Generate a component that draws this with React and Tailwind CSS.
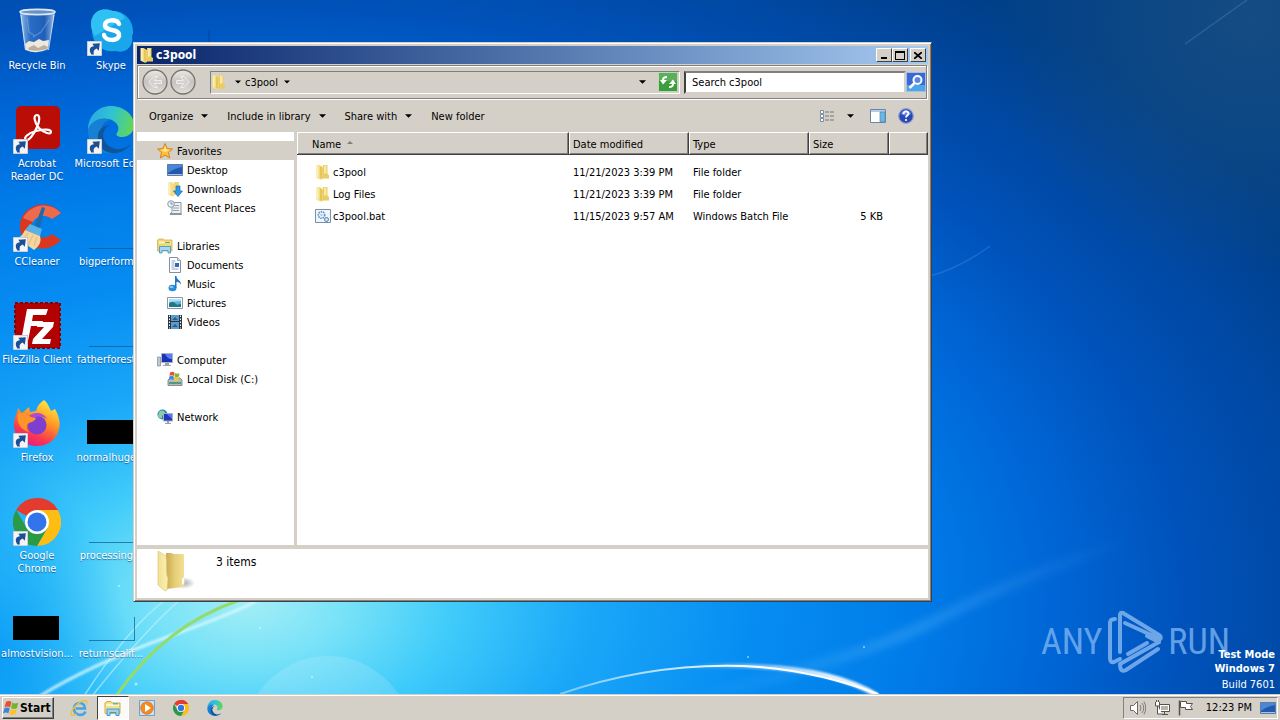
import React, { useState } from 'react';

const desktopItems = [
  { label: 'Recycle Bin', icon: RecycleBinIcon },
  { label: 'Acrobat\nReader DC', icon: AcrobatIcon, shortcut: true },
  { label: 'CCleaner', icon: CCleanerIcon, shortcut: true },
  { label: 'FileZilla Client', icon: FileZillaIcon, shortcut: true },
  { label: 'Firefox', icon: FirefoxIcon, shortcut: true },
  { label: 'Google\nChrome', icon: ChromeIcon, shortcut: true },
  { label: 'almostvision...', icon: BlackThumb },
  { label: 'Skype', icon: SkypeIcon, shortcut: true },
  { label: 'Microsoft Edge', icon: EdgeIcon, shortcut: true },
  { label: 'bigperform...', icon: EmptyThumb },
  { label: 'fatherforest...', icon: EmptyThumb },
  { label: 'normalhuge...', icon: BlackThumb },
  { label: 'processing...', icon: EmptyThumb },
  { label: 'returnscalif...', icon: EmptyThumb },
];

const navGroups = [
  {
    label: 'Favorites',
    icon: StarIcon,
    items: [
      { label: 'Desktop', icon: MonitorIcon },
      { label: 'Downloads', icon: DownloadsIcon },
      { label: 'Recent Places', icon: RecentIcon },
    ],
  },
  {
    label: 'Libraries',
    icon: LibrariesIcon,
    items: [
      { label: 'Documents', icon: DocumentIcon },
      { label: 'Music', icon: MusicIcon },
      { label: 'Pictures', icon: PictureIcon },
      { label: 'Videos', icon: VideoIcon },
    ],
  },
  { label: 'Computer', icon: ComputerIcon, items: [{ label: 'Local Disk (C:)', icon: DiskIcon }] },
  { label: 'Network', icon: NetworkIcon, items: [] },
];

const files = [
  { name: 'c3pool', date: '11/21/2023 3:39 PM', type: 'File folder', size: '', icon: FolderIcon },
  { name: 'Log Files', date: '11/21/2023 3:39 PM', type: 'File folder', size: '', icon: FolderIcon },
  { name: 'c3pool.bat', date: '11/15/2023 9:57 AM', type: 'Windows Batch File', size: '5 KB', icon: BatchIcon },
];

const raised = 'border border-t-white border-l-white border-r-[#404040] border-b-[#404040] bg-[#d4d0c8]';

/* ---------- desktop icons ---------- */

function RecycleBinIcon() {
  return (
    <svg viewBox="0 0 48 48" className="size-12">
      <defs>
        <linearGradient id="bin" x1="0" x2="1">
          <stop offset="0" stopColor="#bcd6f2" stopOpacity=".85" />
          <stop offset=".3" stopColor="#3c78c8" stopOpacity=".7" />
          <stop offset=".7" stopColor="#2c64b8" stopOpacity=".7" />
          <stop offset="1" stopColor="#c8dcf0" stopOpacity=".85" />
        </linearGradient>
      </defs>
      <path d="M7 4 12 42q11 5 23 0L42 4z" fill="url(#bin)" />
      <path d="m14 10 2 14 6 4M36 12l-8 12-8 5" fill="none" stroke="#8ab4e4" strokeWidth="1.200" opacity=".5" />
      <path d="m12 36 4-3 5 1 5-3 4 2 6-1-1 9q-11 6-22 1z" fill="#efe8dc" />
      <path d="m15 40 6-3 4 3 6-3 4 2-1 2q-10 3-18 1z" fill="#b8b0a0" />
      <ellipse cx="24.500" cy="4" rx="17.500" ry="2.600" fill="#6a92c4" stroke="#dce8f4" strokeWidth="1.600" />
      <path d="M8 7 12.500 42M41 7 35.500 42" stroke="#e4eefa" strokeWidth="1" opacity=".8" />
    </svg>
  );
}

function AcrobatIcon() {
  return (
    <svg viewBox="0 0 48 48" className="size-12">
      <rect x="3" y="0" width="44" height="43" rx="5" fill="#b90d06" />
      <path
        d="M24 9c3 0 3 6 0 12-3 7-8 14-11 13-3-2 2-7 10-9 8-2 15-2 15 1s-7 1-12-4c-5-6-6-13-2-13z"
        fill="none"
        stroke="#fff"
        strokeWidth="2.200"
        strokeLinejoin="round"
      />
    </svg>
  );
}

function CCleanerIcon() {
  return (
    <svg viewBox="0 0 48 48" className="size-12">
      <path d="M48 9A23 22 0 1 0 48 36L39 30A12 11 0 1 1 39 15z" fill="#d9371f" />
      <path d="M48 9A23 22 0 0 0 10 14l10 4a12 11 0 0 1 19-3z" fill="#ee6a4c" />
      <path d="m29 3 3 1-6 22-5-2z" fill="#1d6ba8" />
      <path d="m17 20 12 5-2 7-15-6z" fill="#54b4e8" />
      <path d="m12 26 15 6c2 7-2 11-6 14L4 34c4-1 6-4 8-8z" fill="#f4d6a0" />
      <path d="m15 29-6 8m11-6-5 11m9-9-3 9" stroke="#e4bc80" strokeWidth="1.200" />
    </svg>
  );
}

function FileZillaIcon() {
  return (
    <svg viewBox="0 0 48 48" className="size-12">
      <rect x="2" y="1" width="45" height="45" fill="#b30000" stroke="#8c0000" strokeWidth="2" strokeDasharray="3 2" />
      <path d="M14 7h21l-2 6H20l-1 6h11l-2 5H18l-3 15H8z" fill="#fff" />
      <path d="M25 20h16l-1 5-11 12h9l-1 5H19l1-5 11-12h-7z" fill="#fff" />
    </svg>
  );
}

function FirefoxIcon() {
  return (
    <svg viewBox="0 0 48 48" className="size-12">
      <defs>
        <linearGradient id="fox" x1=".8" y1="0" x2=".3" y2="1">
          <stop offset="0" stopColor="#fff04a" />
          <stop offset=".4" stopColor="#ff9a22" />
          <stop offset=".75" stopColor="#fb3a4e" />
          <stop offset="1" stopColor="#e21a88" />
        </linearGradient>
      </defs>
      <path
        d="M31 0c4 3 5 7 7 11l4-2c3 5 6 13 4 20-2 11-12 17-22 17C11 46 1 37 1 25c0-7 3-11 4-17l4 5 7-6 1 5 6-1c1-5 4-8 8-11z"
        fill="url(#fox)"
      />
      <circle cx="24" cy="25" r="9.500" fill="#7c3fd0" />
      <path d="M16 16c4-4 14-5 18 3-5-3-9-3-13-1z" fill="#b04ad0" />
      <path d="M5 14c4-2 9-1 12 3l6 1c-1 3-4 4-7 5-3 2-3 6 0 9-8-2-13-9-11-18z" fill="#ff9428" />
    </svg>
  );
}

function ChromeMark({ className }) {
  return (
    <svg viewBox="0 0 48 48" className={className}>
      <path d="M24 24 3.200 12A24 24 0 0 1 44.800 12z" fill="#e33b2e" />
      <path d="M24 24V0a24 24 0 0 1 20.800 12z" fill="#e33b2e" />
      <path d="M24 12h20.800A24 24 0 0 1 24 48l10.400-18z" fill="#fdbd13" />
      <path d="M13.600 30 3.200 12A24 24 0 0 0 24 48l10.400-18z" fill="#2a9a46" />
      <circle cx="24" cy="24" r="12" fill="#fff" />
      <circle cx="24" cy="24" r="9.500" fill="#3274ec" />
    </svg>
  );
}

function ChromeIcon() {
  return <ChromeMark className="size-12" />;
}

function SkypeIcon() {
  return (
    <svg viewBox="0 0 48 48" className="size-12">
      <path d="M14 2c5-1 9 0 12 1 11 0 20 9 20 20 0 2 0 4-1 5 2 10-6 18-16 15C16 45 5 36 5 22 2 13 6 4 14 2z" fill="#1aa6ea" />
      <path d="M14 2c-8 2-12 11-9 20 1 4 3 6 3 6l30-18C35 5 30 3 26 3c-3-1-7-2-12-1z" fill="#2fc0f4" />
      <path
        d="M32 16c-2-5-14-5-14 1 0 7 14 3 14 10 0 7-14 6-15 0"
        fill="none"
        stroke="#fff"
        strokeWidth="4.500"
        strokeLinecap="round"
      />
    </svg>
  );
}

function EdgeMark({ className, id }) {
  return (
    <svg viewBox="0 0 48 48" className={className}>
      <defs>
        <linearGradient id={id} x1="0" x2="1" y1=".3" y2=".5">
          <stop offset="0" stopColor="#2aa8e8" />
          <stop offset=".5" stopColor="#30c4d0" />
          <stop offset="1" stopColor="#62d658" />
        </linearGradient>
      </defs>
      <path d="M1 24C1 10 11 0 24 0s23 9 23 19c0 8-6 12-12 12-4 0-7-2-5-4 2-3 2-7-1-10-6-7-22-6-28 7z" fill={`url(#${id})`} />
      <path d="M1 24c3-10 14-14 22-10-6 1-10 7-9 15 1 9 9 15 17 17-16 6-31-6-30-22z" fill="#1680d4" />
      <path d="M23 19c-7 3-9 11-4 18 6 8 17 8 25 1-5 7-13 10-20 9-8-1-14-8-13-17 0-6 5-11 12-11z" fill="#10559c" />
    </svg>
  );
}

function EdgeIcon() {
  return <EdgeMark className="size-12" id="edgeLarge" />;
}

function BlackThumb() {
  return (
    <div className="flex size-12 items-end pb-1">
      <div className="h-6 w-[46px] border-b border-black/40 bg-black"></div>
    </div>
  );
}

function EmptyThumb() {
  return (
    <div className="flex size-12 items-end pb-[3px] pl-0.5">
      <div className="h-6 w-[46px] border-r border-b border-[#0a5a90]/70"></div>
    </div>
  );
}

function ShortcutArrow() {
  return (
    <svg viewBox="0 0 14 14" className="absolute bottom-0 left-0 size-[15px]">
      <rect width="14" height="14" fill="#f4f4f4" stroke="#8aa0b8" strokeWidth=".8" />
      <path d="M4 12.500C1.500 9 2.500 5 6.500 5L5 2.500l7-.5-1 7-2-2C6.500 8 5.500 10 6.500 12.500z" fill="#1d4f96" />
    </svg>
  );
}

/* ---------- small icons ---------- */

function FolderIcon() {
  return (
    <svg viewBox="0 0 16 16" className="size-4 shrink-0">
      <path d="M8 1h4.500v9l1.500 1v3.500H8z" fill="#e9cc62" />
      <path d="M9 1.500h2.500V9L9 10z" fill="#f8eaa6" />
      <path d="M1.500 1h3L8 3v12l-2 .8-4.500-2z" fill="#f3dd84" />
      <path d="M2 1.500h1.500v12L2 13z" fill="#fbf0b8" />
      <path d="m5 2 2.500 1.500V15L5 14z" fill="#e6c658" />
    </svg>
  );
}

function LargeFolderIcon() {
  return (
    <svg viewBox="0 0 40 44" className="h-11 w-10 shrink-0">
      <defs>
        <linearGradient id="inner" x1="0" x2="1">
          <stop offset="0" stopColor="#c9ab50" />
          <stop offset=".5" stopColor="#e8d07a" />
          <stop offset="1" stopColor="#f2e196" />
        </linearGradient>
        <linearGradient id="cover" x1="0" x2="1">
          <stop offset="0" stopColor="#f2e092" />
          <stop offset="1" stopColor="#fbf1b4" />
        </linearGradient>
        <radialGradient id="folderShade">
          <stop offset="0" stopColor="#70747c" stopOpacity=".6" />
          <stop offset="1" stopColor="#70747c" stopOpacity="0" />
        </radialGradient>
      </defs>
      <ellipse cx="27" cy="32" rx="11" ry="6" fill="url(#folderShade)" />
      <path d="M9 2h6l1 1h10l1 1v24l1 3-2 5-17 2z" fill="url(#inner)" />
      <path d="m1 0 8 5c1 6 0 12 1 20l1 2-1 12-2 1-7-6z" fill="url(#cover)" stroke="#dcc674" strokeWidth=".7" />
      <path d="m25 28 2-2v6l-2 2z" fill="#fff" />
    </svg>
  );
}

function BatchIcon() {
  return (
    <svg viewBox="0 0 16 16" className="size-4 shrink-0">
      <path d="M.5 1.500h15v13H.5z" fill="#eef5fb" stroke="#7b8ea4" />
      <circle cx="6.500" cy="7" r="3.200" fill="none" stroke="#5a92c4" strokeWidth="1.600" strokeDasharray="1.500 .8" />
      <circle cx="6.500" cy="7" r="1.200" fill="#a9cbe8" />
      <circle cx="11.500" cy="11.500" r="2" fill="#cfe2f2" stroke="#4f82b4" />
    </svg>
  );
}

function StarIcon() {
  return (
    <svg viewBox="0 0 16 16" className="size-4 shrink-0">
      <path d="m8 .5 2.200 5 5.300.5-4 3.600 1.200 5.400L8 12.200 3.300 15l1.200-5.400-4-3.600 5.300-.5z" fill="#fdbf3a" stroke="#d07d1c" strokeWidth=".9" />
      <path d="m8 2.500 1.500 4 3.500.5-5 2-4-2 2.700-.5z" fill="#ffe58c" />
    </svg>
  );
}

function MonitorIcon() {
  return (
    <svg viewBox="0 0 16 16" className="size-4 shrink-0">
      <path d="M.5 2.500h15v11H.5z" fill="#2458b0" stroke="#5a7ca8" />
      <path d="M1 3h14v2Q8 6 1 11z" fill="#5b9be4" opacity=".7" />
      <path d="M1 12h14v1H1z" fill="#a8c4dc" />
    </svg>
  );
}

function DownloadsIcon() {
  return (
    <svg viewBox="0 0 16 16" className="size-4 shrink-0">
      <path d="M7 1h5v13H7z" fill="#efd678" />
      <path d="M1.500 1h3L7 3v12l-1 .5L1.500 14z" fill="#f3dd84" />
      <path d="M2 1.500h1.500v12L2 13z" fill="#fbf0b8" />
      <path d="M9 5h4v5h2.500L11 15.500 6.500 10H9z" fill="#3298e4" stroke="#1a6cb4" strokeWidth=".7" />
    </svg>
  );
}

function RecentIcon() {
  return (
    <svg viewBox="0 0 16 16" className="size-4 shrink-0">
      <path d="M5 2.500h9v12H3l2-3z" fill="#eef1f4" stroke="#8d98a2" />
      <path d="M7 5.500h5M6 8h6M6 10.500h6" stroke="#8fa4b4" />
      <path d="M3 13h11l1 2H4z" fill="#8b969e" />
      <circle cx="4" cy="4" r="3.300" fill="#e8f2f6" stroke="#8f9ba4" />
      <path d="M4 2v2h2" fill="none" stroke="#55788f" strokeWidth=".8" />
    </svg>
  );
}

function LibrariesIcon() {
  return (
    <svg viewBox="0 0 16 16" className="size-4 shrink-0">
      <path d="M.5 2 2 1h4l1 1h8v11H.5z" fill="#f0d878" stroke="#cfae50" strokeWidth=".8" />
      <path d="M2 4.500h12" stroke="#fff8d0" strokeWidth="1.500" />
      <path d="M8 4h5v1H8z" fill="#5ab04a" />
      <path d="M2.500 8.500h11V15h-2.500v-2.500h-6V15H2.500z" fill="#a4d8f2" stroke="#4b98c4" strokeWidth=".9" />
    </svg>
  );
}

function DocumentIcon() {
  return (
    <svg viewBox="0 0 16 16" className="size-4 shrink-0">
      <path d="M2.500.5h8l3 3v12h-11z" fill="#fff" stroke="#8290a0" />
      <path d="M4.500 4h4M4.500 6h3M4.500 8h3M4.500 10h3M4.500 12h7" stroke="#88a4c8" />
      <path d="M8 6h4v4H8z" fill="#2c6ac0" />
      <path d="M10.500.5v3h3" fill="#dce4ee" stroke="#8290a0" strokeWidth=".8" />
    </svg>
  );
}

function MusicIcon() {
  return (
    <svg viewBox="0 0 16 16" className="size-4 shrink-0">
      <ellipse cx="5.500" cy="12" rx="4" ry="3.200" fill="#2b8dda" />
      <path d="M8 0h1.500c0 4 5 4 4.500 9-1-3-3-3-4.500-3v6H8z" fill="#1f7acb" />
      <ellipse cx="4.500" cy="11" rx="2" ry="1" fill="#8fd0f8" />
    </svg>
  );
}

function PictureIcon() {
  return (
    <svg viewBox="0 0 16 16" className="size-4 shrink-0">
      <path d="M.5 2.500h15v11H.5z" fill="#fff" stroke="#8496a8" />
      <path d="M2 4h12v8H2z" fill="#5cb4e4" />
      <path d="M2 9c3-4 5-2 7 0s4-1 5 0v3H2z" fill="#1e7886" />
      <path d="M2 4h12v2L2 7z" fill="#b4e0f4" />
    </svg>
  );
}

function VideoIcon() {
  return (
    <svg viewBox="0 0 16 16" className="size-4 shrink-0">
      <path d="M1 1h14v14H1z" fill="#2b3540" />
      <path d="M4 1h8v14H4z" fill="#5c9ccc" />
      <path d="M4 7.500h8" stroke="#2b3540" />
      <path d="m5 6 3-3 3 3zM5 13l3-3 3 3z" fill="#2d5f84" />
      <path d="M2.500 1.500v13M13.500 1.500v13" stroke="#fff" strokeDasharray="1.500 1.500" />
    </svg>
  );
}

function ComputerIcon() {
  return (
    <svg viewBox="0 0 16 16" className="size-4 shrink-0">
      <path d="M.5 5h3v9h-3z" fill="#c0c8d0" stroke="#808c98" strokeWidth=".7" />
      <path d="M4.500 1.500h11v9h-11z" fill="#1c32b4" stroke="#a8b4c8" />
      <path d="M8 2h7v5c-4 0-5-2-7-5z" fill="#5a7cf0" />
      <path d="M8 11h4v2h2v1H6v-1h2z" fill="#98a4b0" />
    </svg>
  );
}

function DiskIcon() {
  return (
    <svg viewBox="0 0 16 16" className="size-4 shrink-0">
      <path d="m1 9 2-2h10l2 2v5.500H1z" fill="#b4bcc0" stroke="#6e7c84" strokeWidth=".8" />
      <path d="M2 11h12v2H2z" fill="#4b9a8c" />
      <path d="M3 1.500c2-1 3-1 4.500 0L7 5c-2-1-3-1-4.500 0z" fill="#e6532c" />
      <path d="M8 2c2 1 3 1 4.500 0L12 5.500c-2 1-3 1-4.500 0z" fill="#7cb830" />
      <path d="M2.300 5.500c2-1 3-1 4.500 0L6.300 9c-2-1-3-1-4.500 0z" fill="#3c8ce0" />
      <path d="M7.300 6c2 1 3 1 4.500 0l-.5 3.500c-2 1-3 1-4.500 0z" fill="#fcc42c" />
    </svg>
  );
}

function NetworkIcon() {
  return (
    <svg viewBox="0 0 16 16" className="size-4 shrink-0">
      <circle cx="5.500" cy="5.500" r="5" fill="#2a7cb8" />
      <path d="M2 3c3-3 6-1 6 1S5 5 5 8s-3 1-4-1z" fill="#8ad0a0" />
      <path d="M6.500 4.500h9V12h-9z" fill="#2038b8" stroke="#a4b0c4" />
      <path d="M10 5h5v5z" fill="#5a78ec" />
      <path d="M10 12h2v2h2v1H8v-1h2z" fill="#94a0ac" />
    </svg>
  );
}

function WindowsFlag() {
  return (
    <svg viewBox="0 0 16 16" className="size-4">
      <path d="M3 2c2-1.500 4-1.200 5.500 0L7 7.500C5.500 6.300 3.500 6.300 1.500 7.500z" fill="#e4512c" />
      <path d="M9.300 2.500c2 1.200 4 1.200 6 0L14 8c-2 1.200-4 1.200-6 0z" fill="#74b42c" />
      <path d="M1.300 8.500c2-1.200 4-1.200 5.500 0l-1.500 5C3.800 12.300 2 12.300 0 13.500z" fill="#3d84dc" />
      <path d="M7.800 9c2 1.200 4 1.200 6 0l-1.500 5c-2 1.200-4 1.200-6 0z" fill="#fbc22c" />
    </svg>
  );
}

function ExplorerIcon() {
  return (
    <svg viewBox="0 0 18 18" className="size-[18px]">
      <path d="M1 4 3 2.500h4L8.500 4H16v10.500H1z" fill="#f7e08c" stroke="#ceac4c" />
      <path d="M2 6h13" stroke="#fffbe0" strokeWidth="1.500" />
      <path d="M9 4h5v1.500H9z" fill="#5bb8a8" />
      <path d="M3 10h12v6.500h-3v-3H6v3H3z" fill="#9ad4f0" stroke="#4a98c8" />
    </svg>
  );
}

function IeIcon() {
  return (
    <svg viewBox="0 0 18 18" className="size-[18px]">
      <path d="M15.500 12.500c-2 5-11.500 4.500-11.500-3C4 2.500 15 2 15 9.500H6" fill="none" stroke="#45a4e2" strokeWidth="2.600" />
      <path d="M1.500 16C-.5 12 10 0 16 2c1 .5 1 2 .5 3.500" fill="none" stroke="#ecc23c" strokeWidth="1.400" />
      <path d="M1.500 16c1 1 3 0 5-1" fill="none" stroke="#ecc23c" strokeWidth="1.400" />
    </svg>
  );
}

function PlayerIcon() {
  return (
    <svg viewBox="0 0 18 18" className="size-[18px]">
      <path d="M1.500 1.500h15v15h-15z" fill="#cfe2f2" stroke="#6ba3d0" />
      <circle cx="9" cy="9" r="6.300" fill="#f58a1e" stroke="#d46a0c" strokeWidth=".6" />
      <path d="m7 5 6 4-6 4z" fill="#fff" />
    </svg>
  );
}

function Caret({ className = 'w-[7px]' }) {
  return (
    <svg viewBox="0 0 8 4" className={`h-1 ${className}`}>
      <path d="M0 0h8L4 4z" fill="#000" />
    </svg>
  );
}

function NavCircle({ label, flip }) {
  return (
    <button type="button" aria-label={label}>
      <svg viewBox="0 0 26 26" className="size-[26px]">
        <defs>
          <linearGradient id={flip ? 'orbB' : 'orbA'} x1="0" x2="0" y1="0" y2="1">
            <stop offset="0" stopColor="#ebe9e6" />
            <stop offset=".5" stopColor="#c6c3bf" />
            <stop offset="1" stopColor="#e2e0dc" />
          </linearGradient>
        </defs>
        <circle cx="13" cy="13" r="12" fill={flip ? 'url(#orbB)' : 'url(#orbA)'} stroke="#77746f" strokeWidth="1.300" />
        <path
          d={flip ? 'M6.500 11.500h7L10.500 7.500h3.500l5.500 5.500-5.500 5.500h-3.500l3-4h-7z' : 'M19.500 11.500h-7l3-4H12L6.500 13l5.500 5.500h3.500l-3-4h7z'}
          fill="#d6d3cf"
          stroke="#efedeb"
        />
      </svg>
    </button>
  );
}

/* ---------- wallpaper ---------- */

function Wallpaper() {
  return (
    <svg viewBox="0 0 1280 720" preserveAspectRatio="xMidYMid slice" className="absolute inset-0 size-full" aria-hidden="true">
      <defs>
        <radialGradient id="sky" gradientUnits="userSpaceOnUse" cx="0" cy="0" r="1" gradientTransform="translate(250 600) scale(1200 760)">
          <stop offset="0" stopColor="#a4eef6" />
          <stop offset=".08" stopColor="#78e2f8" />
          <stop offset=".17" stopColor="#3fcbfa" />
          <stop offset=".28" stopColor="#1ba8f8" />
          <stop offset=".42" stopColor="#068df2" />
          <stop offset=".56" stopColor="#007be8" />
          <stop offset=".67" stopColor="#0066d6" />
          <stop offset=".78" stopColor="#0052ba" />
          <stop offset=".9" stopColor="#0047a0" />
          <stop offset="1" stopColor="#003f88" />
        </radialGradient>
        <radialGradient id="leftShade" gradientUnits="userSpaceOnUse" cx="0" cy="0" r="1" gradientTransform="translate(0 660) scale(130 190)">
          <stop offset="0" stopColor="#0094f6" stopOpacity=".75" />
          <stop offset="1" stopColor="#0094f6" stopOpacity="0" />
        </radialGradient>
        <radialGradient id="corner" gradientUnits="userSpaceOnUse" cx="1250" cy="20" r="260">
          <stop offset="0" stopColor="#1a4f80" stopOpacity=".8" />
          <stop offset="1" stopColor="#1a4f80" stopOpacity="0" />
        </radialGradient>
        <linearGradient id="arc" gradientUnits="userSpaceOnUse" x1="560" y1="690" x2="880" y2="690">
          <stop offset="0" stopColor="#fff" stopOpacity=".4" />
          <stop offset=".6" stopColor="#fff" />
        </linearGradient>
        <linearGradient id="arcGlow" gradientUnits="userSpaceOnUse" x1="690" y1="690" x2="830" y2="690">
          <stop offset="0" stopColor="#fff" stopOpacity="0" />
          <stop offset="1" stopColor="#fff" />
        </linearGradient>
        <linearGradient id="beam" gradientUnits="userSpaceOnUse" x1="680" y1="0" x2="1130" y2="0">
          <stop offset="0" stopColor="#6cc4ff" stopOpacity="0" />
          <stop offset=".5" stopColor="#6cc4ff" stopOpacity=".3" />
          <stop offset="1" stopColor="#6cc4ff" stopOpacity="0" />
        </linearGradient>
        <filter id="soft" x="-20%" y="-20%" width="140%" height="140%">
          <feGaussianBlur stdDeviation="4" />
        </filter>
        <filter id="glow" x="-20%" y="-50%" width="140%" height="200%">
          <feGaussianBlur stdDeviation="1" />
        </filter>
      </defs>
      <rect width="1280" height="720" fill="url(#sky)" />
      <rect width="1280" height="720" fill="url(#leftShade)" />
      <rect width="1280" height="720" fill="url(#corner)" />
      <path d="M680 700Q860 660 940 618T1130 540" fill="none" stroke="url(#beam)" strokeWidth="10" filter="url(#soft)" />
      <path d="m1185 44 62-44M930 276q30-8 60-30" stroke="#8cc4f4" strokeWidth="1.500" opacity=".2" fill="none" />
      <circle cx="328" cy="740" r="84" fill="#fff" opacity=".14" />
      <path d="M40 696Q90 665 170 636T260 598" fill="none" stroke="#dcfaff" strokeWidth="3" opacity=".8" filter="url(#glow)" />
      <path d="M84 696Q130 625 168 598M92 696Q145 630 182 598" fill="none" stroke="#c8f4ff" strokeWidth="1.500" opacity=".6" />
      <path d="M116 696Q165 625 240 600" fill="none" stroke="#93dc6c" strokeWidth="3" />
      <path d="M560 694Q660 660 760 667 820 672 878 694" fill="none" stroke="url(#arc)" strokeWidth="2" />
      <path d="M690 667Q820 660 878 696" fill="none" stroke="url(#arcGlow)" strokeWidth="5" opacity=".9" filter="url(#glow)" />
      <path d="M209 30v14" stroke="#083070" opacity=".5" />
      <g fill="#fff" opacity=".55">
        <circle cx="119" cy="586" r="1" />
        <circle cx="260" cy="628" r="1" />
        <circle cx="136" cy="684" r="1.500" />
        <circle cx="312" cy="677" r="1" />
        <circle cx="748" cy="657" r="1" />
        <circle cx="864" cy="647" r="1" />
      </g>
    </svg>
  );
}

function Watermark() {
  return (
    <div className="absolute right-[50px] bottom-5 flex items-center gap-1 font-['Liberation_Sans_Narrow','Roboto_Condensed','DejaVu_Sans_Condensed',sans-serif] text-4xl text-[#7db4f2]/80">
      <span>ANY</span>
      <svg viewBox="0 0 58 64" className="h-16 w-[58px]" fill="none" stroke="#80b4ee" strokeWidth="4" strokeOpacity=".85" strokeLinejoin="round" strokeLinecap="round">
        <path d="M9 9q-5 0-5 4v35q0 5 4 4l6-3M14 42V5q0-3 3-2l36 22q3 2 1 4L19 13M53 32l-39 22q0 9 6 6l32-21M53 32 41 26M22 44l19-11" />
      </svg>
      <span>RUN</span>
    </div>
  );
}

/* ---------- explorer window ---------- */

function TitleBar() {
  return (
    <header className="flex h-[18px] items-center bg-linear-to-r from-[#0a246a] to-[#a6caf0] px-0.5 text-white">
      <FolderIcon />
      <h1 className="ml-px text-xs font-bold">c3pool</h1>
      <div className="ml-auto flex">
        <button type="button" aria-label="Minimize" className={`flex h-3.5 w-4 items-end px-1 pb-0.5 ${raised}`}>
          <span className="h-0.5 w-1.5 bg-black"></span>
        </button>
        <button type="button" aria-label="Maximize" className={`flex h-3.5 w-4 items-center justify-center ${raised}`}>
          <span className="h-[9px] w-2.5 border border-t-2 border-black"></span>
        </button>
        <button type="button" aria-label="Close" className={`ml-0.5 flex h-3.5 w-4 items-center justify-center ${raised}`}>
          <svg viewBox="0 0 8 7" className="h-[7px] w-2">
            <path d="m0 0 8 7M8 0 0 7" stroke="#000" strokeWidth="1.700" />
          </svg>
        </button>
      </div>
    </header>
  );
}

function AddressBar() {
  const [query, setQuery] = useState('Search c3pool');

  return (
    <div className="mt-px mr-px mb-px flex h-[34px] items-center border border-[#808080] pl-1 shadow-[inset_1px_1px_0_#fff,1px_1px_0_#fff]">
      <div className="flex gap-0.5">
        <NavCircle label="Back" />
        <NavCircle label="Forward" flip />
      </div>
      <div className="ml-3.5 flex h-[23px] flex-1 items-center border border-t-[#808080] border-r-white border-b-white border-l-[#808080]">
        <FolderIcon />
        <button type="button" aria-label="Show folders" className="ml-2">
          <Caret className="w-1.5" />
        </button>
        <button type="button" className="ml-1 flex items-center gap-1.5">
          c3pool
          <Caret className="w-1.5" />
        </button>
        <button type="button" aria-label="Previous locations" className="mr-3 ml-auto">
          <Caret />
        </button>
        <button type="button" aria-label="Refresh" className="mr-px">
          <svg viewBox="0 0 20 20" className="size-5">
            <rect x=".5" y=".5" width="19" height="19" fill="#3d9c3c" stroke="#bcd8b8" />
            <path d="M1 1h18v8H1z" fill="#70bc6c" opacity=".6" />
            <path d="M9 4v2q-3 0-3 2h3l-4 4.500L2 8h2q0-4 5-4zM11 16v-2q3 0 3-2h-3l4-4.500L18 12h-2q0 4-5 4z" fill="#fff" />
          </svg>
        </button>
      </div>
      <input
        type="text"
        aria-label="Search c3pool"
        value={query}
        onChange={(e) => setQuery(e.target.value)}
        className="ml-1 h-[23px] w-[222px] border-2 border-t-[#808080] border-r-[#d4d0c8] border-b-[#d4d0c8] border-l-[#404040] bg-white px-1.5 outline-none"
      />
      <button type="button" aria-label="Search">
        <svg viewBox="0 0 20 20" className="size-5">
          <rect x=".5" y=".5" width="19" height="19" rx="1" fill="#3a68d4" stroke="#a8bce8" />
          <path d="M1 13h18v6H1z" fill="#50b8ec" opacity=".8" />
          <circle cx="11.500" cy="8" r="4" fill="#5a86e4" stroke="#fff" strokeWidth="2" />
          <path d="m8.500 11-5 5" stroke="#fff" strokeWidth="2.500" />
        </svg>
      </button>
    </div>
  );
}

function CommandBar() {
  return (
    <div className="flex h-8 items-center gap-[19px] pr-3.5 pl-3">
      <button type="button" className="flex items-center gap-2">
        Organize <Caret />
      </button>
      <button type="button" className="flex items-center gap-2">
        Include in library <Caret />
      </button>
      <button type="button" className="flex items-center gap-2">
        Share with <Caret />
      </button>
      <button type="button">New folder</button>
      <div className="ml-auto flex items-center gap-3">
        <button type="button" aria-label="Change your view" className="mr-1 flex items-center gap-3">
          <svg viewBox="0 0 16 14" className="h-3.5 w-4">
            <path d="M1.500 1.500h3v3h-3zM1.500 5.500h3v3h-3zM1.500 9.500h3v3h-3z" fill="#fff" stroke="#7c8ca4" />
            <path d="M6 3h10M6 7h10M6 11h10" stroke="#74767c" strokeDasharray="4 1" />
          </svg>
          <Caret />
        </button>
        <button type="button" aria-label="Show the preview pane">
          <svg viewBox="0 0 16 16" className="size-4">
            <path d="M.5 1.500h15v13H.5z" fill="#fff" stroke="#6a84ac" />
            <path d="M1 2h14v2H1z" fill="#b4cce4" />
            <path d="M10 4h5v10h-5z" fill="#6cb8e4" stroke="#4a88b4" strokeWidth=".7" />
          </svg>
        </button>
        <button type="button" aria-label="Get help">
          <svg viewBox="0 0 16 16" className="size-4">
            <circle cx="8" cy="8" r="7.300" fill="#2846b4" stroke="#8e9cd0" strokeWidth="1.200" />
            <path d="M3 6c1-5 9-5 10 0-3 2-7 2-10 0z" fill="#6c8ae4" />
            <path d="M5.500 6c0-3.500 5-3.200 5-.5C10.500 7.500 8 7.500 8 9.500" fill="none" stroke="#fff" strokeWidth="1.800" />
            <circle cx="8" cy="12" r="1.100" fill="#fff" />
          </svg>
        </button>
      </div>
    </div>
  );
}

function NavPane() {
  return (
    <nav className="flex w-[157px] flex-col gap-[19px] bg-white pt-[9px]">
      {navGroups.map((group, i) => (
        <div key={group.label}>
          <a href="#" className={`flex h-[19px] items-center gap-1 pt-px pl-5 ${i === 0 ? 'bg-[#d4d0c8]' : ''}`}>
            <group.icon />
            {group.label}
          </a>
          {group.items.map((item) => (
            <a key={item.label} href="#" className="flex h-[19px] items-center gap-1 pt-px pl-[30px]">
              <item.icon />
              {item.label}
            </a>
          ))}
        </div>
      ))}
    </nav>
  );
}

function FileList() {
  const th = 'h-[23px] border-t border-r border-b border-t-white border-r-[#404040] border-b-[#404040] bg-[#d4d0c8] px-1 pt-px text-left font-normal shadow-[inset_1px_0_0_#fff,inset_-1px_-1px_0_#808080]';

  return (
    <div className="flex-1 bg-white">
      <table className="w-full table-fixed border-separate border-spacing-0">
        <colgroup>
          <col className="w-[272px]" />
          <col className="w-[120px]" />
          <col className="w-[120px]" />
          <col className="w-20" />
          <col />
        </colgroup>
        <thead>
          <tr>
            <th className={`${th} pl-[15px]`}>
              <span className="flex items-center gap-1.5">
                Name
                <svg viewBox="0 0 6 3" className="mb-1 h-[3px] w-1.5">
                  <path d="M3 0 6 3H0z" fill="#808080" />
                </svg>
              </span>
            </th>
            <th className={th}>Date modified</th>
            <th className={th}>Type</th>
            <th className={th}>Size</th>
            <td className={th}></td>
          </tr>
          <tr className="h-1.5">
            <td colSpan="5"></td>
          </tr>
        </thead>
        <tbody>
          {files.map((file) => (
            <tr key={file.name} className="h-[22px]">
              <td className="pl-[18px]">
                <span className="flex items-center gap-0.5">
                  <file.icon />
                  {file.name}
                </span>
              </td>
              <td className="pl-1 whitespace-nowrap">{file.date}</td>
              <td className="pl-1 whitespace-nowrap">{file.type}</td>
              <td className="pr-1.5 text-right">{file.size}</td>
              <td></td>
            </tr>
          ))}
        </tbody>
      </table>
    </div>
  );
}

function ExplorerWindow() {
  return (
    <main className="absolute top-[42px] left-[133px] flex h-[560px] w-[799px] flex-col border border-t-[#d4d0c8] border-r-[#404040] border-b-[#404040] border-l-[#d4d0c8] bg-[#d4d0c8] p-[3px] shadow-[inset_1px_1px_0_#fff,inset_-1px_-1px_0_#808080]">
      <TitleBar />
      <AddressBar />
      <CommandBar />
      <div className="flex flex-1 gap-[3px]">
        <NavPane />
        <FileList />
      </div>
      <footer className="mt-1 flex h-[49px] gap-[19px] bg-white pt-0.5 pl-5 text-xs">
        <LargeFolderIcon />
        <span className="pt-[3px]">3 items</span>
      </footer>
    </main>
  );
}

/* ---------- taskbar ---------- */

function Taskbar() {
  return (
    <footer className="relative flex h-7 items-center border-t border-[#d4d0c8] bg-[#d4d0c8] pr-0.5 pl-0.5 shadow-[inset_0_1px_0_#fff]">
      <button
        type="button"
        className={`flex h-[22px] w-[52px] items-center gap-px text-xs font-bold shadow-[inset_-1px_-1px_0_#808080] ${raised}`}
      >
        <WindowsFlag />
        Start
      </button>
      <div className="ml-[9px] flex items-center gap-0.5">
        <button type="button" aria-label="Internet Explorer" className="flex h-6 w-8 items-center justify-center">
          <IeIcon />
        </button>
        <button
          type="button"
          aria-label="c3pool"
          className="flex h-6 w-8 items-center justify-center border border-t-[#404040] border-r-white border-b-white border-l-[#404040] bg-[#fbfaf8]"
        >
          <ExplorerIcon />
        </button>
        <button type="button" aria-label="Windows Media Player" className="flex h-6 w-8 items-center justify-center">
          <PlayerIcon />
        </button>
        <button type="button" aria-label="Google Chrome" className="flex h-6 w-8 items-center justify-center">
          <ChromeMark className="size-4" />
        </button>
        <button type="button" aria-label="Microsoft Edge" className="flex h-6 w-8 items-center justify-center">
          <EdgeMark className="size-4" id="edgeSmall" />
        </button>
      </div>
      <div className="ml-auto flex h-[22px] items-center gap-2 border border-t-[#808080] border-r-white border-b-white border-l-[#808080] pr-px pl-1.5">
        <svg viewBox="0 0 16 16" className="size-4" fill="#fff" stroke="#6c6a66">
          <path d="M.5 5.500h3l4-4v13l-4-4h-3z" />
          <path d="M10 5q2 3 0 6M12 3q3.500 5 0 10M14 1.500q3.500 6.500 0 13" fill="none" strokeWidth=".8" />
        </svg>
        <svg viewBox="0 0 16 16" className="size-4" fill="#fff" stroke="#55534f">
          <path d="M5.500 4.500h10v7h-10zM8 14.500h6M10.500 12v2" />
          <path d="M7 6h7v4H7z" fill="#b8b4ac" stroke="none" />
          <path d="M1.500 2v4h4V2M2.500 0v2M4.500 0v2M3.500 6v8h5" />
        </svg>
        <svg viewBox="0 0 16 16" className="size-4" fill="#fff" stroke="#55534f">
          <path d="M2.500 1.500h6v2h6l-2 3 2 3h-7v-2h-5z" />
          <path d="M1.500.5v15" strokeWidth="1.500" />
        </svg>
        <time className="ml-1">12:23 PM</time>
        <MonitorIcon />
      </div>
    </footer>
  );
}

function App() {
  return (
    <div className="relative flex h-screen flex-col overflow-hidden font-['DejaVu_Sans_Condensed','Noto_Sans',sans-serif] text-[11px] leading-[13px] text-black">
      <Wallpaper />
      <div className="relative flex-1">
        <div className="grid w-[148px] grid-flow-col grid-cols-2 grid-rows-[repeat(7,98px)] pt-2">
          {desktopItems.map((item) => (
            <a key={item.label} href="#" className="flex flex-col items-center gap-[3px] text-center whitespace-pre text-white [text-shadow:0_1px_1px_rgba(0,40,100,0.6)]">
              <span className="relative">
                <item.icon />
                {item.shortcut && <ShortcutArrow />}
              </span>
              <span>{item.label}</span>
            </a>
          ))}
        </div>
        <ExplorerWindow />
        <Watermark />
        <div className="absolute right-[5px] bottom-0 pb-0.5 text-right leading-[14px] text-white">
          <p className="font-bold">Test Mode</p>
          <p className="font-bold">Windows 7</p>
          <p className="pt-0.5">Build 7601</p>
        </div>
      </div>
      <Taskbar />
    </div>
  );
}

export default App;
